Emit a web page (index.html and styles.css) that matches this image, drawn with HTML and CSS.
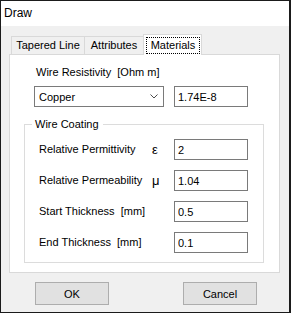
FILE: index.html
```html
<!DOCTYPE html>
<html lang="en">
<head>
    <meta charset="UTF-8">
    <title>Draw</title>
    <link rel="stylesheet" href="styles.css">
</head>
<body>

<div class="window">
    <div class="titlebar">Draw</div>

    <div class="content">
        <div class="tabs">
            <div class="tab tab-tapered">Tapered Line</div>
            <div class="tab tab-attributes">Attributes</div>
            <div class="tab tab-materials active"><span class="focus">Materials</span></div>
        </div>

        <div class="panel">
            <div class="res-label">Wire Resistivity&nbsp; [Ohm m]</div>
            <div class="res-row">
                <div class="combo">
                    <span>Copper</span>
                    <svg width="8" height="5" viewBox="0 0 8 5"><polyline points="0.5,0.5 4,4 7.5,0.5" fill="none" stroke="#4d4d4d" stroke-width="1"/></svg>
                </div>
                <input class="field" type="text" value="1.74E-8">
            </div>

            <fieldset class="group">
                <legend>Wire Coating</legend>
                <div class="coat-grid">
                    <label>Relative Permittivity</label>
                    <span class="sym">&#949;</span>
                    <input class="field" type="text" value="2">

                    <label>Relative Permeability</label>
                    <span class="sym">&#956;</span>
                    <input class="field" type="text" value="1.04">

                    <label>Start Thickness&nbsp; [mm]</label>
                    <span class="sym"></span>
                    <input class="field" type="text" value="0.5">

                    <label>End Thickness&nbsp; [mm]</label>
                    <span class="sym"></span>
                    <input class="field" type="text" value="0.1">
                </div>
            </fieldset>
        </div>

        <div class="buttons">
            <button>OK</button>
            <button>Cancel</button>
        </div>
    </div>
</div>

</body>
</html>
```

FILE: styles.css
```css
* {
    box-sizing: border-box;
}
body {
    margin: 0;
    font-family: "Segoe UI", "Liberation Sans", Arial, sans-serif;
    font-size: 11px;
    color: #000;
    background: #fff;
}
.window {
    width: 291px;
    height: 313px;
    border: 1px solid #1b1b1b;
    border-right-width: 2px;
    display: flex;
    flex-direction: column;
    background: #f0f0f0;
}
.titlebar {
    height: 25px;
    line-height: 25px;
    padding-left: 3px;
    font-size: 12px;
    background: #fff;
}
.content {
    flex: 1;
    padding: 8px 9px 0 8px;
}
.tabs {
    display: flex;
    align-items: flex-end;
    height: 20px;
    padding-left: 2px;
}
.tab {
    height: 18px;
    line-height: 17px;
    margin-right: -1px;
    border: 1px solid #d9d9d9;
    border-bottom: none;
    background: #f0f0f0;
    text-align: center;
}
.tab-tapered {
    width: 74px;
}
.tab-attributes {
    width: 60px;
}
.tab-materials {
    width: 59px;
}
.tab.active {
    height: 21px;
    margin-bottom: -1px;
    background: #fff;
    position: relative;
    z-index: 1;
}
.focus {
    display: block;
    height: 17px;
    margin: 2px 1px 0 2px;
    line-height: 15px;
    border: 1px dotted #000;
}
.panel {
    border: 1px solid #d9d9d9;
    background: #fff;
    padding: 0 15px 9px 14px;
}
.res-label {
    margin: 10px 0 6px 12px;
    line-height: 15px;
}
.res-row {
    display: flex;
    gap: 10px;
    margin-left: 10px;
}
.combo {
    width: 130px;
    height: 21px;
    border: 1px solid #7a7a7a;
    padding: 0 5px 0 4px;
    display: flex;
    align-items: center;
    justify-content: space-between;
}
.field {
    width: 74px;
    height: 21px;
    border: 1px solid #7a7a7a;
    padding: 0 3px;
    font: inherit;
    color: #000;
    outline: none;
}
.group {
    margin: 10px 0 0 0;
    border: 1px solid #dcdcdc;
    padding: 7px 0 9px 14px;
}
.group legend {
    margin-left: -7px;
    padding: 0 4px 0 3px;
    line-height: 15px;
}
.coat-grid {
    display: grid;
    grid-template-columns: 113px 22px 74px;
    row-gap: 10px;
    align-items: center;
}
.coat-grid label {
    line-height: 21px;
}
.sym {
    font-size: 13px;
}
.buttons {
    display: flex;
    gap: 74px;
    margin-top: 9px;
    padding-left: 26px;
}
.buttons button {
    width: 74px;
    height: 23px;
    border: 1px solid #adadad;
    background: #e1e1e1;
    font: inherit;
    color: #000;
    padding: 0;
}
```
